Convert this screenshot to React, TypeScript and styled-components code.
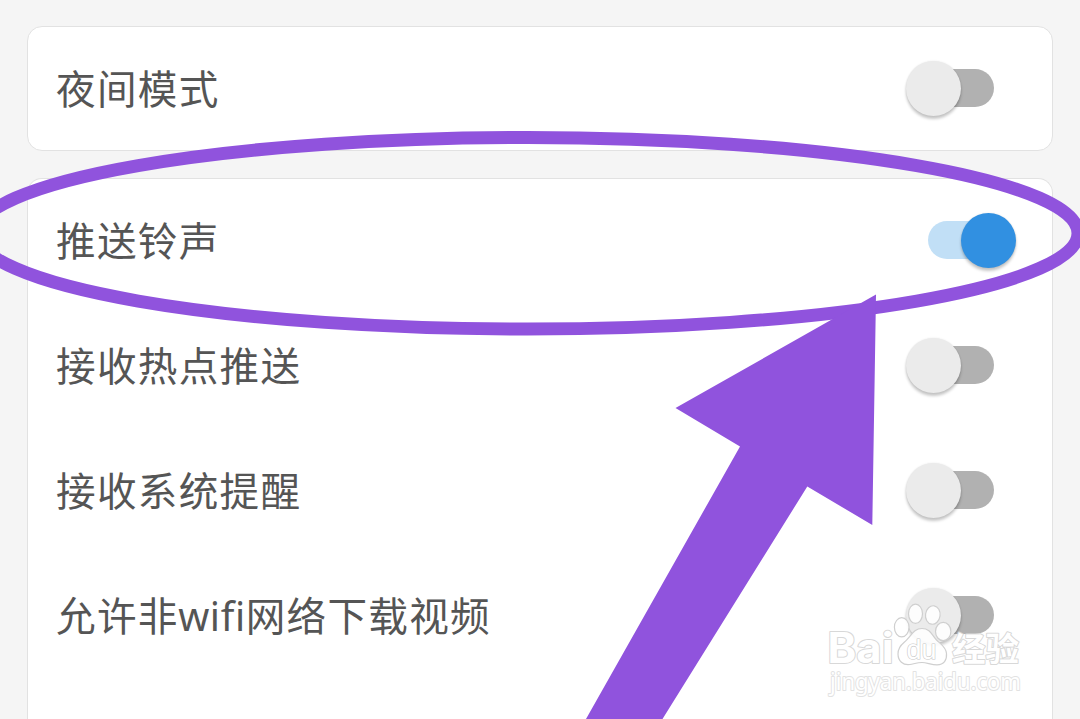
import { useState } from 'react';
import styled, { createGlobalStyle } from 'styled-components';

const GlobalStyle = createGlobalStyle`
  * {
    box-sizing: border-box;
  }

  body {
    margin: 0;
    overflow: hidden;
    background-color: #f5f5f5;
    font-family: 'Noto Sans', 'Noto Sans CJK SC', sans-serif;
  }
`;

const Page = styled.main`
  position: relative;
  display: flex;
  flex-direction: column;
  gap: 27px;
  height: 719px;
  padding: 26px 27px 0;
  overflow: hidden;
`;

const Card = styled.section<{ $open?: boolean }>`
  flex: ${({ $open }) => ($open ? '1 0 auto' : '0 0 auto')};
  border: 1px solid #e2e2e2;
  border-bottom-width: ${({ $open }) => ($open ? 0 : '1px')};
  border-radius: ${({ $open }) => ($open ? '15px 15px 0 0' : '15px')};
  background-color: #fff;
`;

const Row = styled.div<{ $compact?: boolean }>`
  display: flex;
  justify-content: space-between;
  align-items: center;
  height: ${({ $compact }) => ($compact ? 123 : 125)}px;
  padding: 0 36.5px ${({ $compact }) => ($compact ? 1 : 3)}px 28px;
`;

const Label = styled.span`
  padding-top: 1px;
  color: #555;
  font-family: 'Noto Sans', 'Noto Sans CJK SC', sans-serif;
  font-size: 39.6px;
  letter-spacing: 1.3px;
  line-height: 60px;
  white-space: nowrap;
`;

const Latin = styled.span`
  margin-left: -0.5px;
  letter-spacing: 0.6px;
`;

const Switch = styled.button<{ $on: boolean }>`
  display: flex;
  justify-content: center;
  align-items: center;
  position: relative;
  width: 110px;
  height: 56px;
  padding: 0;
  border: 0;
  background: none;
  cursor: pointer;

  &::before {
    content: '';
    width: 66px;
    height: 38px;
    border-radius: 19px;
    background-color: ${({ $on }) => ($on ? '#c1dff6' : '#b1b1b1')};
  }

  &::after {
    content: '';
    position: absolute;
    top: 0.5px;
    left: ${({ $on }) => ($on ? '55px' : '0.5px')};
    width: 55px;
    height: 55px;
    border-radius: 50%;
    background-color: ${({ $on }) => ($on ? '#3190e1' : '#ebebeb')};
    box-shadow: 0 3px 3px rgba(0, 0, 0, 0.22), 0 0 2px rgba(0, 0, 0, 0.1);
  }
`;

const Overlay = styled.svg`
  position: absolute;
  top: 0;
  left: 0;
  pointer-events: none;
`;

const MarkText = styled.text`
  fill: #fff;
  stroke: #d8d8d8;
  stroke-width: 2px;
  paint-order: stroke;
  stroke-linejoin: round;
  font-family: 'Inter', 'Noto Sans CJK SC', sans-serif;
  font-weight: 700;
`;

const DomainText = styled(MarkText)`
  stroke: #e2e2e2;
  font-family: 'Noto Sans', sans-serif;
  font-weight: 400;
`;

const DuText = styled(MarkText)`
  stroke: #c8c8c8;
  stroke-width: 1.2px;
  font-family: 'Liberation Sans', sans-serif;
  font-weight: 400;
`;

const pushSettings = [
  { name: 'ringtone', label: '推送铃声' },
  { name: 'hot', label: '接收热点推送' },
  { name: 'system', label: '接收系统提醒' },
  {
    name: 'mobileData',
    label: (
      <>
        允许非<Latin>wifi</Latin>网络下载视频
      </>
    ),
  },
];

function Annotation() {
  return (
    <Overlay width="1080" height="719" viewBox="0 0 1080 719">
      <ellipse
        cx="527.5"
        cy="233.3"
        rx="550.5"
        ry="95.8"
        fill="none"
        stroke="#9053dd"
        strokeWidth="13"
      />
      <path
        d="M876 294.5 L872.3 525 L807.3 486.5 L662.5 719 H586 L740 446.5 L675.5 408 Z"
        fill="#9053dd"
      />
    </Overlay>
  );
}

function Watermark() {
  return (
    <Overlay width="1080" height="719" viewBox="0 0 1080 719">
      <MarkText x="827.5" y="663" fontSize="42" textLength="66" lengthAdjust="spacingAndGlyphs">
        Bai
      </MarkText>
      <g fill="#fff" fillOpacity="0.9" stroke="#cfcfcf" strokeWidth="1.2">
        <ellipse cx="901.7" cy="627.3" rx="7.3" ry="9.6" />
        <ellipse cx="915.5" cy="613.8" rx="7" ry="9.6" />
        <ellipse cx="932.8" cy="615" rx="7.3" ry="9.3" transform="rotate(8 932.8 615)" />
        <ellipse cx="943.2" cy="631.5" rx="7.7" ry="9.2" />
        <path d="M922 628.5 C913 628.5 911 637 904 642.5 C899 646.5 898 650 898 654 C898 661 903 665.5 910 664.5 C915 663.5 918 662.5 922 662.5 C927 662.5 931 664.8 937 664.8 C944 664.8 947 660 946.5 653.5 C946 647 941 644.5 936.5 640 C932 635 930 628.5 922 628.5 Z" />
      </g>
      <DuText x="906.5" y="659" fontSize="28" textLength="30" lengthAdjust="spacingAndGlyphs">
        du
      </DuText>
      <MarkText x="952" y="660.5" fontSize="33.5">
        经验
      </MarkText>
      <DomainText x="830" y="690" fontSize="23.5" textLength="191" lengthAdjust="spacingAndGlyphs">
        jingyan.baidu.com
      </DomainText>
    </Overlay>
  );
}

function App() {
  const [settings, setSettings] = useState<Record<string, boolean>>({
    night: false,
    ringtone: true,
    hot: false,
    system: false,
    mobileData: false,
  });

  const handleToggle = (name: string) => {
    setSettings({
      ...settings,
      [name]: !settings[name],
    });
  };

  return (
    <Page>
      <GlobalStyle />
      <Card>
        <Row $compact>
          <Label>夜间模式</Label>
          <Switch type="button" $on={settings.night} onClick={() => handleToggle('night')} />
        </Row>
      </Card>
      <Card $open>
        {pushSettings.map(({ name, label }) => (
          <Row key={name}>
            <Label>{label}</Label>
            <Switch type="button" $on={settings[name]} onClick={() => handleToggle(name)} />
          </Row>
        ))}
      </Card>
      <Annotation />
      <Watermark />
    </Page>
  );
}

export default App;
